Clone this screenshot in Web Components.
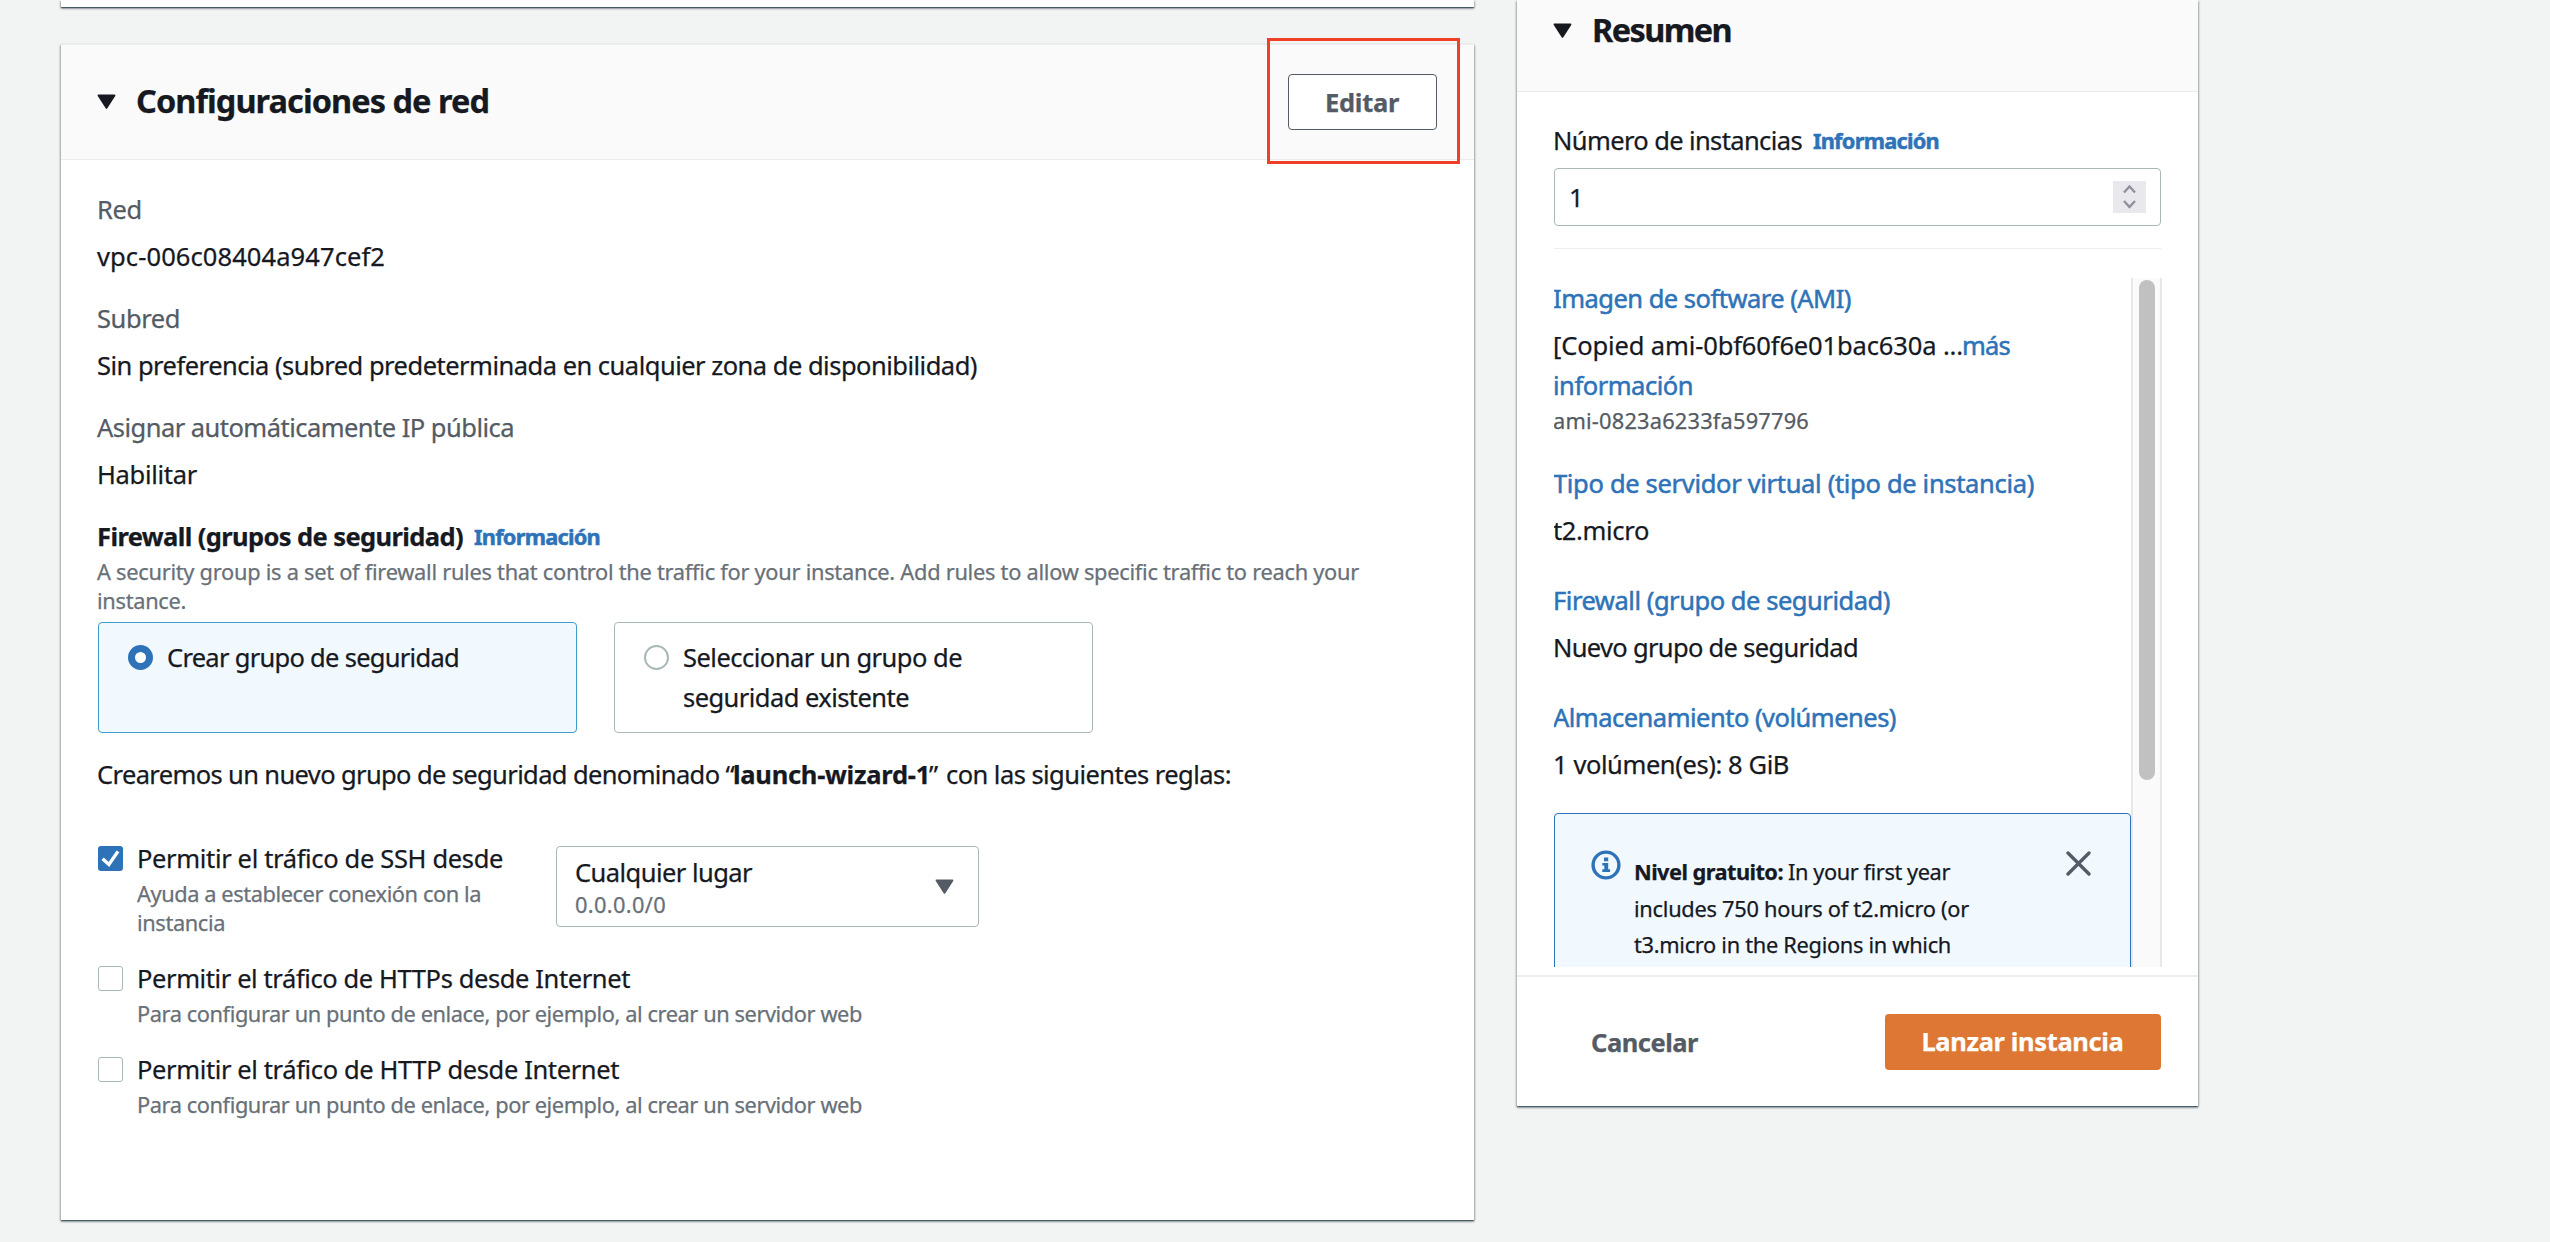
<!DOCTYPE html>
<html lang="es">
<head>
<meta charset="utf-8">
<title>Lanzar una instancia</title>
<style>
html,body{margin:0;height:100%;background:#f2f3f3;overflow:hidden}
body{font-family:"Noto Sans","Open Sans",sans-serif;color:#16191f;font-size:25.5px;line-height:40px}
</style>
</head>
<body>
<launch-page></launch-page>
<script>
const define = (name, markup, setup) => {
  const template = document.createElement('template');
  template.innerHTML = markup;
  customElements.define(name, class extends HTMLElement {
    connectedCallback() {
      if (this.shadowRoot) return;
      this.attachShadow({ mode: 'open' }).append(template.content.cloneNode(true));
      if (setup) setup(this, this.shadowRoot);
    }
  });
};

/* Text run whose tracking is adjusted so that it advances exactly `w` pixels. */
define('ui-text', `<style>
:host{display:block;white-space:nowrap;font-size:25.5px;line-height:40px;-webkit-text-stroke:.25px currentColor}
:host([small]){font-size:21.8px;line-height:29px}
:host([note]){font-size:21.8px;line-height:36.5px}
:host([title]){font-size:32.5px;line-height:40px;font-weight:700;margin-top:-3px}
:host([muted]){color:#545b64}
:host([hint]){color:#687078}
:host([link]){color:#2e73b8;-webkit-text-stroke-width:.5px}
:host([strong]){font-weight:700}
span{display:inline-block;margin-left:-1px}
</style><span><slot></slot></span>`, (host, root) => {
  const target = parseFloat(host.getAttribute('w'));
  if (!target) return;
  const span = root.querySelector('span');
  const natural = span.getBoundingClientRect().width;
  span.style.letterSpacing = ((target - natural) / host.textContent.length).toFixed(3) + 'px';
});

define('ui-caret', `<style>:host{display:block;width:19px;height:16px;color:#16191f;flex:none}svg{display:block}</style>
<svg width="19" height="16" viewBox="0 0 19 16"><path d="M1.6 1.4h15.8L9.5 13.8z" fill="currentColor" stroke="currentColor" stroke-width="2" stroke-linejoin="round"/></svg>`);

define('ui-panel', `<style>
:host{display:flex;flex-direction:column;box-sizing:border-box;background:#fff;
box-shadow:0 1px 0 rgba(0,28,36,.38),0 2px 2px rgba(0,28,36,.3),1px 1px 2px rgba(0,28,36,.25),-1px 1px 2px rgba(0,28,36,.25)}
header{display:flex;align-items:center;box-sizing:border-box;height:var(--head,115px);background:#fafafa;border-bottom:1px solid #eaeded;padding:var(--head-pad,0 37px 0 36px);gap:21px}
ui-caret{margin-top:-1px}
slot[name=action]{display:block;margin-left:auto}
.grow{flex:1}
</style><header><ui-caret></ui-caret><slot name="title"></slot><div class="grow"></div><slot name="action"></slot></header><slot></slot>`);

define('ui-button', `<style>
:host{display:flex;align-items:center;justify-content:center;box-sizing:border-box;height:56px;border-radius:4px;padding-bottom:1px;color:#545b64}
:host([normal]){width:149px;border:1.5px solid #545b64;background:#fff}
:host([primary]){width:276px;background:#dd7733;color:#fff}
</style><slot></slot>`);

define('ui-tile', `<style>
:host{display:flex;box-sizing:border-box;width:479px;height:111px;border:1px solid #aab7b8;border-radius:4px;padding:14px 0 0 29px;gap:15px;background:#fff}
:host([selected]){border-color:#3f9dc9;background:#f1f8fe}
i{box-sizing:border-box;flex:none;width:25px;height:25px;margin-top:8px;border-radius:50%;border:2px solid #aab7b8;background:#fff}
:host([selected]) i{border:7.5px solid #2e73b8}
</style><i></i><div><slot></slot></div>`);

define('ui-check', `<style>
:host{display:flex;gap:15px}
i{box-sizing:border-box;flex:none;width:25px;height:25px;margin-top:8px;border-radius:3px;border:1.5px solid #aab7b8;background:#fff}
:host([checked]) i{border:0;background:#2e73b8}
svg{display:none}
:host([checked]) svg{display:block}
div{display:flex;flex-direction:column;gap:1px}
</style><i><svg width="25" height="25" viewBox="0 0 25 25"><path d="M4.6 12.8l6.3 5.7L20 5.4" fill="none" stroke="#fff" stroke-width="3.4"/></svg></i><div><slot></slot></div>`);

define('ui-select', `<style>
:host{display:flex;align-items:center;justify-content:space-between;box-sizing:border-box;width:423px;height:81px;border:1px solid #aab7b8;border-radius:4px;padding:0 24px 0 19px}
div{display:flex;flex-direction:column;padding-top:1px}
ui-caret{color:#545b64;margin-top:1px}
</style><div><slot></slot></div><ui-caret></ui-caret>`);

define('ui-number', `<style>
:host{display:flex;align-items:center;justify-content:space-between;box-sizing:border-box;height:58px;border:1px solid #aab7b8;border-radius:4px;padding:0 14px 0 15px}
svg{display:block}
</style><slot></slot><svg width="33" height="32" viewBox="0 0 33 32"><rect width="33" height="32" fill="#e9e9ed"/><path d="M11 11.5l5.5-6 5.5 6M11 20l5.5 6 5.5-6" fill="none" stroke="#8f8f9d" stroke-width="2.4"/></svg>`);

define('ui-alert', `<style>
:host{display:flex;align-items:flex-start;box-sizing:border-box;width:577px;height:260px;flex:none;border:1px solid #2e73b8;border-radius:4px;background:#f1f8fe;padding:36px 36px 0}
.icon{margin-right:14px;flex:none}
.body{padding-top:4px;flex:1}
.close{margin:1px 3px 0 0;flex:none}
</style>
<svg class="icon" width="30" height="30" viewBox="0 0 30 30"><circle cx="15" cy="15" r="12.9" fill="none" stroke="#2e73b8" stroke-width="3.4"/><path d="M13 7.4h4.2v3.8H13zM11.3 12.9h5.9v6.3h1.9v2.7h-7.8v-2.7h2v-3.6h-2z" fill="#2e73b8"/></svg>
<div class="body"><slot></slot></div>
<svg class="close" width="25" height="25" viewBox="0 0 25 25"><path d="M2 2l21 21M23 2L2 23" fill="none" stroke="#545b64" stroke-width="3.3" stroke-linecap="round"/></svg>`);

define('network-panel', `<style>
:host{display:block;position:relative}
ui-panel{height:1176px;border-top:1px solid #eaeded}
.body{padding:29px 37px;display:flex;flex-direction:column}
.pair{display:flex;flex-direction:column;gap:7px;margin-bottom:22px}
.row{display:flex}
.head{gap:12px;margin-bottom:1px}
.tiles{gap:37px;margin:7px 0 21px}
.rules{display:flex;flex-direction:column;gap:21px;margin-top:44px}
.ssh{gap:52px}
ui-select{margin-top:8px}
/* Highlight frame drawn over the edit button */
.mark{position:absolute;left:1206px;top:-6px;width:193px;height:126px;box-sizing:border-box;border:3px solid #ee4026}
</style>
<ui-panel>
<ui-text slot="title" title w="353">Configuraciones de red</ui-text>
<ui-button slot="action" normal><ui-text strong w="74">Editar</ui-text></ui-button>
<div class="body">
<div class="pair"><ui-text muted w="45">Red</ui-text><ui-text w="288">vpc-006c08404a947cef2</ui-text></div>
<div class="pair"><ui-text muted w="83">Subred</ui-text><ui-text w="880">Sin preferencia (subred predeterminada en cualquier zona de disponibilidad)</ui-text></div>
<div class="pair"><ui-text muted w="417">Asignar automáticamente IP pública</ui-text><ui-text w="100">Habilitar</ui-text></div>
<div class="row head"><ui-text strong w="366">Firewall (grupos de seguridad)</ui-text><ui-text small style="line-height:42px;height:40px" strong link w="126">Información</ui-text></div>
<ui-text small hint w="1262">A security group is a set of firewall rules that control the traffic for your instance. Add rules to allow specific traffic to reach your</ui-text>
<ui-text small hint w="89">instance.</ui-text>
<div class="row tiles">
<ui-tile selected><ui-text w="292">Crear grupo de seguridad</ui-text></ui-tile>
<ui-tile><ui-text w="279">Seleccionar un grupo de</ui-text><ui-text w="226">seguridad existente</ui-text></ui-tile>
</div>
<div class="row"><ui-text w="637">Crearemos un nuevo grupo de seguridad denominado “</ui-text><ui-text strong w="197">launch-wizard-1</ui-text><ui-text w="11">”</ui-text><ui-text style="margin-left:7px" w="285">con las siguientes reglas:</ui-text></div>
<div class="rules">
<div class="row ssh"><ui-check checked><ui-text w="366">Permitir el tráfico de SSH desde</ui-text><div><ui-text small hint w="344">Ayuda a establecer conexión con la</ui-text><ui-text small hint w="88">instancia</ui-text></div></ui-check>
<ui-select style="margin-left:1px"><ui-text style="line-height:34px" w="177">Cualquier lugar</ui-text><ui-text small hint w="91" style="margin-top:1px">0.0.0.0/0</ui-text></ui-select></div>
<ui-check><ui-text w="493">Permitir el tráfico de HTTPs desde Internet</ui-text><ui-text small hint w="725">Para configurar un punto de enlace, por ejemplo, al crear un servidor web</ui-text></ui-check>
<ui-check><ui-text w="482">Permitir el tráfico de HTTP desde Internet</ui-text><ui-text small hint w="725">Para configurar un punto de enlace, por ejemplo, al crear un servidor web</ui-text></ui-check>
</div>
</div>
</ui-panel>
<div class="mark"></div>`);

define('summary-panel', `<style>
:host{display:block}
ui-panel{height:1106px;--head:92px;--head-pad:0 36px 28px}
.count{padding:28px 37px 0}
.row{display:flex;gap:12px;margin-bottom:8px;height:40px}
hr{border:0;border-top:1px solid #eaeded;margin:22px 0 0}
.scroll{display:flex;margin:29px 36px 0 37px;height:689px;overflow:hidden;flex:none}
.list{display:flex;flex-direction:column;width:577px;flex:none}
.track{flex:1;box-sizing:border-box;border:solid #e8e8e8;border-width:0 2px;background:#fafafa;padding-top:2px;display:flex;justify-content:center}
.thumb{width:16px;height:500px;border-radius:8px;background:#c1c1c1}
.item{display:flex;flex-direction:column;gap:7px;margin-bottom:30px}
.item.ami{gap:0;margin-bottom:26px}
.line{display:flex;margin-top:7px}
footer{display:flex;align-items:center;justify-content:space-between;box-sizing:border-box;border-top:2px solid #eaeded;margin-top:auto;height:131px;padding:0 37px 0 75px}
</style>
<ui-panel>
<ui-text slot="title" title w="139">Resumen</ui-text>
<div class="count">
<div class="row"><ui-text w="249">Número de instancias</ui-text><ui-text small style="line-height:42px" strong link w="126">Información</ui-text></div>
<ui-number><ui-text>1</ui-text></ui-number>
<hr>
</div>
<div class="scroll">
<div class="list">
<div class="item ami"><ui-text link w="298">Imagen de software (AMI)</ui-text>
<div class="line"><ui-text w="410">[Copied ami-0bf60f6e01bac630a ...</ui-text><ui-text link w="48">más</ui-text></div>
<ui-text link w="140">información</ui-text>
<ui-text small muted w="256" style="line-height:32px">ami-0823a6233fa597796</ui-text></div>
<div class="item"><ui-text link w="481">Tipo de servidor virtual (tipo de instancia)</ui-text><ui-text w="96">t2.micro</ui-text></div>
<div class="item"><ui-text link w="337">Firewall (grupo de seguridad)</ui-text><ui-text w="305">Nuevo grupo de seguridad</ui-text></div>
<div class="item" style="margin-bottom:29px"><ui-text link w="343">Almacenamiento (volúmenes)</ui-text><ui-text w="236">1 volúmen(es): 8 GiB</ui-text></div>
<ui-alert>
<div style="display:flex;gap:6px"><ui-text note strong w="149">Nivel gratuito:</ui-text><ui-text note w="162">In your first year</ui-text></div>
<ui-text note w="335">includes 750 hours of t2.micro (or</ui-text>
<ui-text note w="317">t3.micro in the Regions in which</ui-text>
</ui-alert>
</div>
<div class="track"><div class="thumb"></div></div>
</div>
<footer><ui-text strong muted w="107">Cancelar</ui-text><ui-button primary><ui-text strong w="202">Lanzar instancia</ui-text></ui-button></footer>
</ui-panel>`);

define('launch-page', `<style>
:host{display:flex;align-items:flex-start;gap:43px;padding-left:61px;height:1242px;box-sizing:border-box}
.main{display:flex;flex-direction:column;gap:37px;width:1413px}
.previous{display:block;height:7px;background:#fff;box-shadow:0 1px 0 rgba(0,28,36,.38),0 2px 2px rgba(0,28,36,.3),1px 1px 2px rgba(0,28,36,.25),-1px 1px 2px rgba(0,28,36,.25)}
summary-panel{width:681px}
</style>
<div class="main"><div class="previous"></div><network-panel></network-panel></div>
<summary-panel></summary-panel>`);
</script>
</body>
</html>
